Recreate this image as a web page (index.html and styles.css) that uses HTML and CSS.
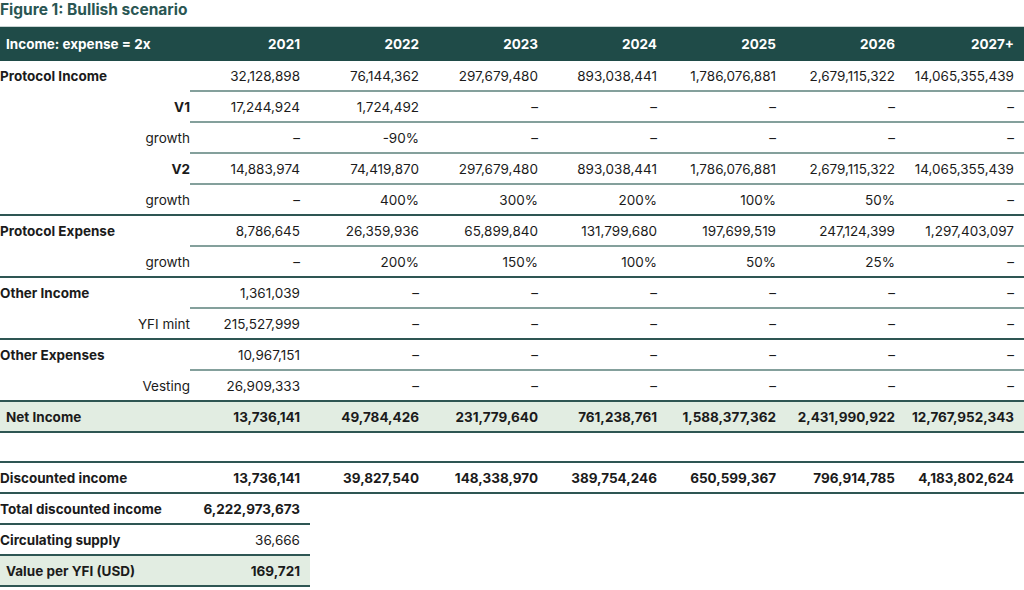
FILE: index.html
```html
<!DOCTYPE html>
<html>
<head>
<meta charset="utf-8">
<link rel="stylesheet" href="styles.css">
</head>
<body>
<h1 class="title">Figure 1: Bullish scenario</h1>
<table class="fig">
  <colgroup>
    <col class="c-label"><col class="c-first"><col class="c-val"><col class="c-val"><col class="c-val"><col class="c-val"><col class="c-val"><col class="c-val">
  </colgroup>
  <thead>
    <tr class="head">
      <th class="lab">Income: expense = 2x</th><th>2021</th><th>2022</th><th>2023</th><th>2024</th><th>2025</th><th>2026</th><th>2027+</th>
    </tr>
  </thead>
  <tbody>
    <tr class="sub"><td class="grp">Protocol Income</td><td>32,128,898</td><td>76,144,362</td><td>297,679,480</td><td>893,038,441</td><td>1,786,076,881</td><td>2,679,115,322</td><td>14,065,355,439</td></tr>
    <tr class="sub"><td class="sl b">V1</td><td>17,244,924</td><td>1,724,492</td><td>–</td><td>–</td><td>–</td><td>–</td><td>–</td></tr>
    <tr class="sub"><td class="sl">growth</td><td>–</td><td>-90%</td><td>–</td><td>–</td><td>–</td><td>–</td><td>–</td></tr>
    <tr class="sub"><td class="sl b">V2</td><td>14,883,974</td><td>74,419,870</td><td>297,679,480</td><td>893,038,441</td><td>1,786,076,881</td><td>2,679,115,322</td><td>14,065,355,439</td></tr>
    <tr class="end"><td class="sl">growth</td><td>–</td><td>400%</td><td>300%</td><td>200%</td><td>100%</td><td>50%</td><td>–</td></tr>
    <tr class="sub"><td class="grp">Protocol Expense</td><td>8,786,645</td><td>26,359,936</td><td>65,899,840</td><td>131,799,680</td><td>197,699,519</td><td>247,124,399</td><td>1,297,403,097</td></tr>
    <tr class="end"><td class="sl">growth</td><td>–</td><td>200%</td><td>150%</td><td>100%</td><td>50%</td><td>25%</td><td>–</td></tr>
    <tr class="sub"><td class="grp">Other Income</td><td>1,361,039</td><td>–</td><td>–</td><td>–</td><td>–</td><td>–</td><td>–</td></tr>
    <tr class="end"><td class="sl">YFI mint</td><td>215,527,999</td><td>–</td><td>–</td><td>–</td><td>–</td><td>–</td><td>–</td></tr>
    <tr class="sub"><td class="grp">Other Expenses</td><td>10,967,151</td><td>–</td><td>–</td><td>–</td><td>–</td><td>–</td><td>–</td></tr>
    <tr class="end"><td class="sl">Vesting</td><td>26,909,333</td><td>–</td><td>–</td><td>–</td><td>–</td><td>–</td><td>–</td></tr>
    <tr class="end total"><td class="grp ind">Net Income</td><td>13,736,141</td><td>49,784,426</td><td>231,779,640</td><td>761,238,761</td><td>1,588,377,362</td><td>2,431,990,922</td><td>12,767,952,343</td></tr>
    <tr class="end blank"><td colspan="8"></td></tr>
    <tr class="end bold"><td class="grp">Discounted income</td><td>13,736,141</td><td>39,827,540</td><td>148,338,970</td><td>389,754,246</td><td>650,599,367</td><td>796,914,785</td><td>4,183,802,624</td></tr>
    <tr class="short bold"><td class="grp">Total discounted income</td><td>6,222,973,673</td><td class="none" colspan="6"></td></tr>
    <tr class="short"><td class="grp">Circulating supply</td><td>36,666</td><td class="none" colspan="6"></td></tr>
    <tr class="short bold green"><td class="grp ind">Value per YFI (USD)</td><td>169,721</td><td class="none" colspan="6"></td></tr>
  </tbody>
</table>
</body>
</html>
```

FILE: styles.css
```css
html, body {
  margin: 0;
  padding: 0;
  background: #ffffff;
}
body {
  font-family: Inter, "Noto Sans", "Liberation Sans", sans-serif;
  font-size: 13.5px;
  color: #1b1b1b;
  width: 1024px;
}
.title {
  margin: 0;
  padding: 0;
  height: 26px;
  line-height: 19px;
  font-size: 15.5px;
  font-weight: 700;
  color: #2a5653;
}
.fig {
  width: 1024px;
  border-collapse: collapse;
  table-layout: fixed;
  border-top: 1px solid #c9d4d3;
}
.c-label { width: 190px; }
.c-first { width: 120px; }
.c-val { width: 119px; }
.fig th, .fig td {
  padding: 0 10px 0 0;
  text-align: right;
  white-space: nowrap;
}
.head th {
  background: #1f4b48;
  color: #ffffff;
  font-weight: 700;
  height: 34px;
}
.head th.lab {
  text-align: left;
  padding-left: 6px;
}
.fig td {
  height: 29px;
  border-bottom: 2px solid transparent;
}
.fig td.grp {
  text-align: left;
  font-weight: 700;
  padding-left: 0;
}
.fig td.sl {
  padding-right: 0;
}
.fig td.b { font-weight: 700; }
.fig td.ind { padding-left: 6px; }
.sub td { border-bottom-color: #84a09c; }
.sub td:first-child { border-bottom-color: transparent; }
.end td { border-bottom-color: #2e5653; }
.total td {
  background: #e2ede2;
  font-weight: 700;
  border-top: 2px solid #2e5653;
}
.blank td { height: 28px; }
.bold td { font-weight: 700; }
.short td { border-bottom-color: #2e5653; }
.short td.none { border-bottom-color: transparent; background: transparent; }
.green td { background: #e2ede2; }
.green td.none { background: transparent; }
```
